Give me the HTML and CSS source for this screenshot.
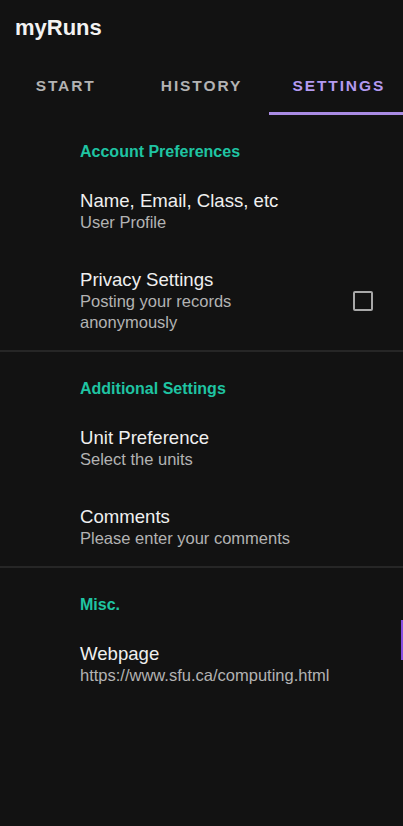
FILE: index.html
```html
<!DOCTYPE html>
<html>
<head>
<meta charset="utf-8">
<link rel="stylesheet" href="styles.css">
</head>
<body>
<div class="app">
  <header class="appbar">
    <div class="title">myRuns</div>
  </header>
  <nav class="tabs">
    <div class="tab">START</div>
    <div class="tab">HISTORY</div>
    <div class="tab active">SETTINGS</div>
  </nav>
  <main class="prefs">
    <section class="category">
      <div class="cat-title">Account Preferences</div>
      <div class="item">
        <div class="texts">
          <div class="item-title">Name, Email, Class, etc</div>
          <div class="item-sub">User Profile</div>
        </div>
      </div>
      <div class="item">
        <div class="texts narrow">
          <div class="item-title">Privacy Settings</div>
          <div class="item-sub">Posting your records anonymously</div>
        </div>
        <div class="checkbox"></div>
      </div>
    </section>
    <div class="divider"></div>
    <section class="category">
      <div class="cat-title">Additional Settings</div>
      <div class="item">
        <div class="texts">
          <div class="item-title">Unit Preference</div>
          <div class="item-sub">Select the units</div>
        </div>
      </div>
      <div class="item">
        <div class="texts">
          <div class="item-title">Comments</div>
          <div class="item-sub">Please enter your comments</div>
        </div>
      </div>
    </section>
    <div class="divider"></div>
    <section class="category">
      <div class="cat-title">Misc.</div>
      <div class="item">
        <div class="texts">
          <div class="item-title">Webpage</div>
          <div class="item-sub">https://www.sfu.ca/computing.html</div>
        </div>
      </div>
    </section>
  </main>
  <div class="edge-mark"></div>
</div>
</body>
</html>
```
FILE: styles.css
```css
* { box-sizing: border-box; }
html, body {
  margin: 0;
  padding: 0;
  background: #121212;
}
body {
  font-family: "Liberation Sans", Arial, sans-serif;
  color: #ececec;
}
.app {
  position: relative;
  width: 403px;
  height: 826px;
  background: #121212;
  overflow: hidden;
}
.appbar {
  height: 56px;
  display: flex;
  align-items: center;
  padding-left: 15px;
}
.title {
  font-size: 22px;
  font-weight: bold;
  color: #f2f2f2;
  line-height: 56px;
}
.tabs {
  display: grid;
  grid-template-columns: 1fr 1fr 1fr;
  height: 59px;
}
.tab {
  display: flex;
  align-items: center;
  justify-content: center;
  font-size: 15.5px;
  font-weight: bold;
  letter-spacing: 1.9px;
  color: #b3b3b3;
  border-bottom: 3px solid transparent;
  padding-top: 4px;
}
.tab:first-child { padding-right: 3px; }
.tab.active {
  color: #b49af0;
  border-bottom-color: #a98be3;
  padding-left: 6px;
}
.category {
  padding-left: 80px;
}
.cat-title {
  height: 56px;
  padding-top: 27px;
  line-height: 20px;
  font-size: 16px;
  font-weight: bold;
  color: #1fc4a2;
}
.item {
  display: flex;
  align-items: center;
  padding: 19px 0 17px 0;
}
.texts { flex: 1; }
.texts.narrow { max-width: 200px; }
.item-title {
  font-size: 18.6px;
  line-height: 22px;
  color: #efefef;
}
.item-sub {
  font-size: 16.5px;
  line-height: 21px;
  color: #b3b3b3;
}
.checkbox {
  width: 20px;
  height: 20px;
  border: 2px solid #a8a8a8;
  border-radius: 2px;
  margin-left: auto;
  margin-right: 30px;
  margin-top: 0;
}
.divider {
  height: 2px;
  background: #262626;
}
.edge-mark {
  position: absolute;
  right: 0;
  top: 620px;
  width: 2px;
  height: 40px;
  background: #8a4fe0;
}
```
